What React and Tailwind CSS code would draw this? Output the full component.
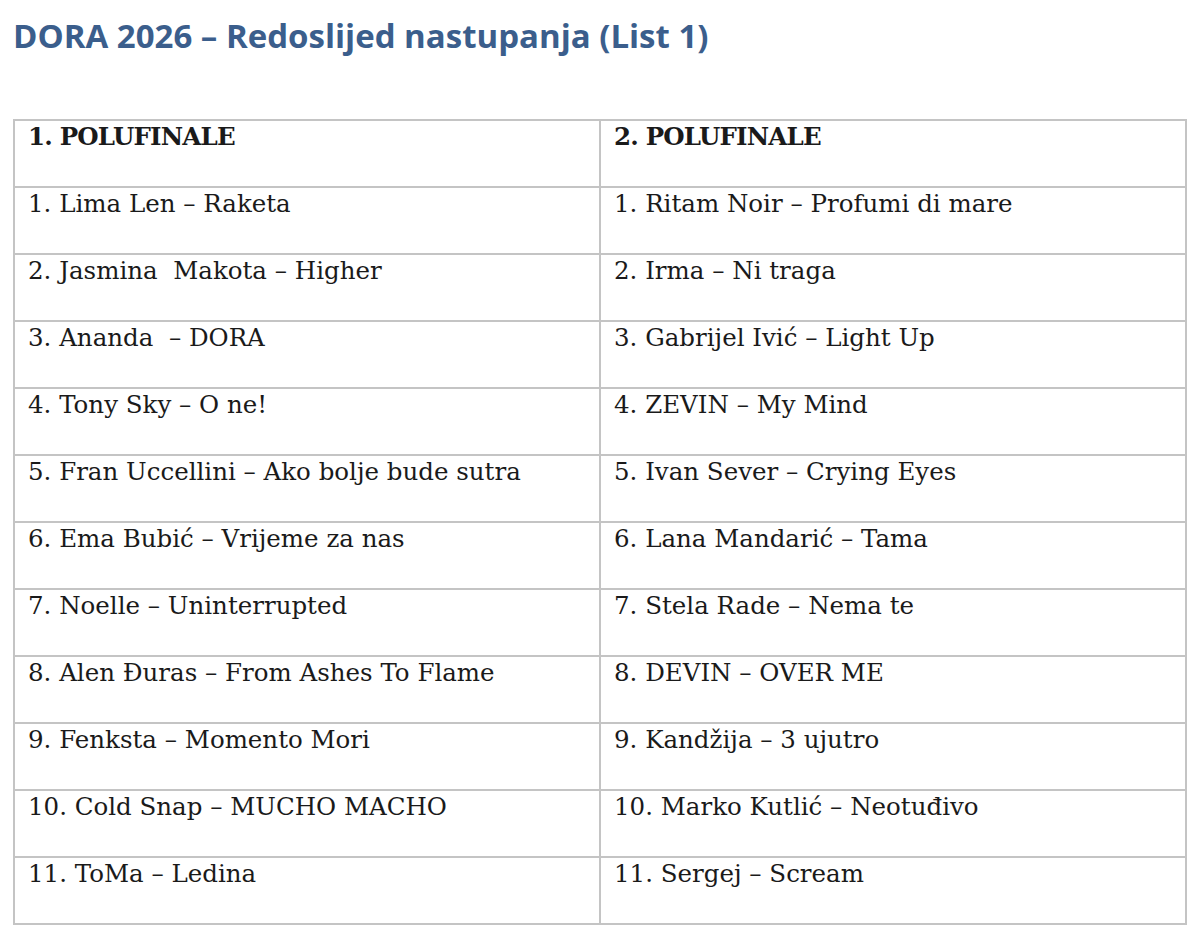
const left = [
  "1. Lima Len – Raketa",
  "2. Jasmina  Makota – Higher",
  "3. Ananda  – DORA",
  "4. Tony Sky – O ne!",
  "5. Fran Uccellini – Ako bolje bude sutra",
  "6. Ema Bubić – Vrijeme za nas",
  "7. Noelle – Uninterrupted",
  "8. Alen Đuras – From Ashes To Flame",
  "9. Fenksta – Momento Mori",
  "10. Cold Snap – MUCHO MACHO",
  "11. ToMa – Ledina",
];

const right = [
  "1. Ritam Noir – Profumi di mare",
  "2. Irma – Ni traga",
  "3. Gabrijel Ivić – Light Up",
  "4. ZEVIN – My Mind",
  "5. Ivan Sever – Crying Eyes",
  "6. Lana Mandarić – Tama",
  "7. Stela Rade – Nema te",
  "8. DEVIN – OVER ME",
  "9. Kandžija – 3 ujutro",
  "10. Marko Kutlić – Neotuđivo",
  "11. Sergej – Scream",
];

const Cell = ({ children, bold }) => (
  <td
    className={`h-[67px] align-top border-2 border-[#c4c4c4] pl-[13px] pt-0 text-[24.5px] leading-[31px] text-[#1a1a1a] whitespace-pre ${bold ? "font-bold tracking-[-0.8px]" : ""}`}
  >
    {children}
  </td>
);

export default function App() {
  return (
    <div className="w-[1200px] h-[940px] bg-white overflow-hidden">
      <h1
        className="pl-[13px] pt-[14px] text-[33px] leading-[44px] font-bold text-[#3b5e8c]"
        style={{ fontFamily: "'Open Sans', Lato, sans-serif" }}
      >
        DORA 2026 – Redoslijed nastupanja (List 1)
      </h1>
      <table
        className="ml-[13px] mt-[61px] w-[1174px] border-collapse table-fixed"
        style={{ fontFamily: "'DejaVu Serif', 'Liberation Serif', serif" }}
      >
        <tbody>
          <tr>
            <Cell bold>1. POLUFINALE</Cell>
            <Cell bold>2. POLUFINALE</Cell>
          </tr>
          {left.map((l, i) => (
            <tr key={i}>
              <Cell>{l}</Cell>
              <Cell>{right[i]}</Cell>
            </tr>
          ))}
        </tbody>
      </table>
    </div>
  );
}
